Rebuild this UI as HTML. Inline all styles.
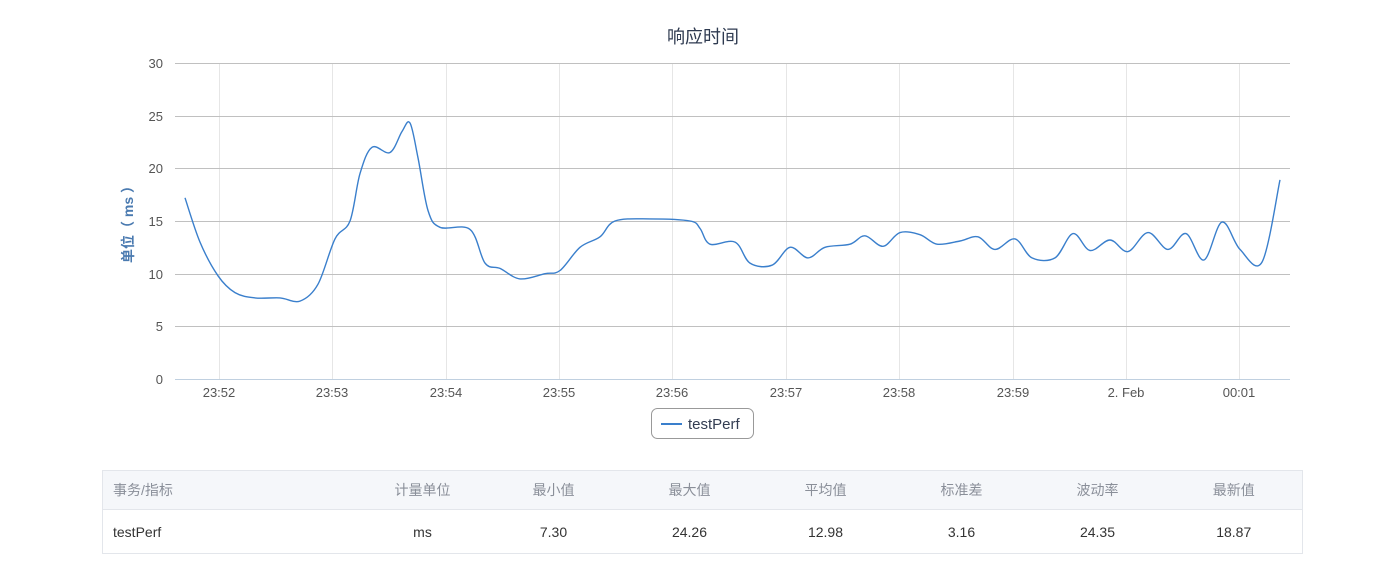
<!DOCTYPE html>
<html><head><meta charset="utf-8">
<style>
body{margin:0;width:1400px;height:568px;background:#fff;font-family:"Liberation Sans","Noto Sans CJK SC",sans-serif;overflow:hidden;position:relative}
svg{position:absolute;left:0;top:0}
table{position:absolute;left:102px;top:470px;width:1200px;border-collapse:collapse;border:1px solid #e3e6eb;font-size:14px;table-layout:fixed}
th,td{padding:0}
th{height:38px;background:#f5f7fa;color:#8a8f99;font-weight:normal;border-bottom:1px solid #e3e6eb;text-align:center}
td{height:43px;color:#333;text-align:center}
th:first-child,td:first-child{text-align:left;padding-left:10px}
</style></head><body>
<svg width="1400" height="470" font-family="Liberation Sans, Noto Sans CJK SC, sans-serif">
<text x="703" y="43" text-anchor="middle" font-size="18" fill="#2e3a50">响应时间</text>
<g stroke="#e6e6e6" stroke-width="1">
<line x1="219.5" y1="63" x2="219.5" y2="379"/><line x1="332.5" y1="63" x2="332.5" y2="379"/><line x1="446.5" y1="63" x2="446.5" y2="379"/><line x1="559.5" y1="63" x2="559.5" y2="379"/><line x1="672.5" y1="63" x2="672.5" y2="379"/><line x1="786.5" y1="63" x2="786.5" y2="379"/><line x1="899.5" y1="63" x2="899.5" y2="379"/><line x1="1013.5" y1="63" x2="1013.5" y2="379"/><line x1="1126.5" y1="63" x2="1126.5" y2="379"/><line x1="1239.5" y1="63" x2="1239.5" y2="379"/>
</g>
<g stroke="#c0c0c0" stroke-width="1">
<line x1="175" y1="63.5" x2="1290" y2="63.5"/><line x1="175" y1="116.5" x2="1290" y2="116.5"/><line x1="175" y1="168.5" x2="1290" y2="168.5"/><line x1="175" y1="221.5" x2="1290" y2="221.5"/><line x1="175" y1="274.5" x2="1290" y2="274.5"/><line x1="175" y1="326.5" x2="1290" y2="326.5"/>
</g>
<line x1="175" y1="379.5" x2="1290" y2="379.5" stroke="#c0d0e0"/>
<g font-size="13" fill="#555" text-anchor="end">
<text x="163" y="68">30</text><text x="163" y="121">25</text><text x="163" y="173">20</text><text x="163" y="226">15</text><text x="163" y="279">10</text><text x="163" y="331">5</text><text x="163" y="384">0</text>
</g>
<g font-size="13" fill="#555" text-anchor="middle">
<text x="219" y="397">23:52</text><text x="332" y="397">23:53</text><text x="446" y="397">23:54</text><text x="559" y="397">23:55</text><text x="672" y="397">23:56</text><text x="786" y="397">23:57</text><text x="899" y="397">23:58</text><text x="1013" y="397">23:59</text><text x="1126" y="397">2. Feb</text><text x="1239" y="397">00:01</text>
</g>
<text transform="translate(133,221) rotate(-90)" text-anchor="middle" font-size="14" font-weight="bold" fill="#4a7ab0">单位（ ms ）</text>
<path id="ln" d="" fill="none" stroke="#3a7fcc" stroke-width="1.4"/>
<rect x="651.5" y="408.5" width="102" height="30" rx="6" fill="#fff" stroke="#999"/>
<line x1="661" y1="424" x2="682" y2="424" stroke="#3a7fcc" stroke-width="2"/>
<text x="688" y="429" font-size="15" fill="#333d52">testPerf</text>
</svg>
<table>
<colgroup><col style="width:257px"><col style="width:126px"><col style="width:136px"><col style="width:136px"><col style="width:136px"><col style="width:136px"><col style="width:136px"><col style="width:137px"></colgroup>
<tr><th>事务/指标</th><th>计量单位</th><th>最小值</th><th>最大值</th><th>平均值</th><th>标准差</th><th>波动率</th><th>最新值</th></tr>
<tr><td>testPerf</td><td>ms</td><td>7.30</td><td>24.26</td><td>12.98</td><td>3.16</td><td>24.35</td><td>18.87</td></tr>
</table>
<script>
var p=[[185,17.2],[200,13],[218,9.8],[235,8.2],[255,7.7],[280,7.7],[300,7.4],[318,9],[335,13.3],[350,15],[360,19.5],[372,22],[390,21.5],[402,23.5],[410,24.3],[418,21],[428,16],[440,14.4],[470,14.2],[485,11],[500,10.5],[520,9.5],[545,10],[560,10.3],[580,12.5],[600,13.5],[615,15],[650,15.2],[690,15],[700,14.3],[710,12.8],[735,13],[750,11],[772,10.8],[790,12.5],[808,11.5],[825,12.5],[850,12.8],[865,13.6],[883,12.6],[900,13.9],[920,13.7],[937,12.8],[960,13.1],[978,13.5],[995,12.3],[1015,13.3],[1032,11.5],[1055,11.5],[1073,13.8],[1090,12.2],[1110,13.2],[1128,12.1],[1148,13.9],[1168,12.3],[1186,13.8],[1204,11.3],[1222,14.9],[1240,12.3],[1262,11.1],[1280,18.9]];
p=p.map(function(a){return [a[0],379-a[1]*10.533]});
var d="M"+p[0][0]+","+p[0][1];
for(var i=0;i<p.length-1;i++){var a=p[Math.max(i-1,0)],b=p[i],c=p[i+1],e=p[Math.min(i+2,p.length-1)];
d+=" C"+(b[0]+(c[0]-a[0])/6).toFixed(1)+","+(b[1]+(c[1]-a[1])/6).toFixed(1)+" "+(c[0]-(e[0]-b[0])/6).toFixed(1)+","+(c[1]-(e[1]-b[1])/6).toFixed(1)+" "+c[0]+","+c[1].toFixed(1);}
document.getElementById("ln").setAttribute("d",d);
</script>
</body></html>
